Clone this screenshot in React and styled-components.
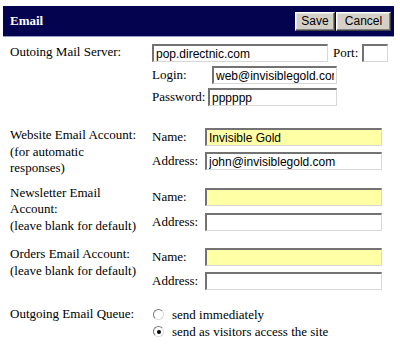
import React from "react";
import styled, { createGlobalStyle } from "styled-components";

const Global = createGlobalStyle`
  html, body { margin: 0; padding: 0; background: #ffffff; }
  body {
    font-family: "Liberation Serif", "Times New Roman", serif;
    font-size: 13px;
    color: #000000;
  }
`;

const Panel = styled.div`
  margin: 6px 0 0 3px;
  width: 391px;
`;

const Header = styled.div`
  box-sizing: border-box;
  height: 31px;
  display: flex;
  align-items: center;
  justify-content: space-between;
  padding: 0 3px 0 7px;
  background: #03034f;
  border-bottom: 1px solid #9a9ac8;
`;

const Title = styled.div`
  color: #ffffff;
  font-weight: bold;
  font-size: 13px;
`;

const ButtonGroup = styled.div`
  display: flex;
  gap: 1px;
`;

const Button = styled.button`
  box-sizing: border-box;
  width: ${(p) => p.$w}px;
  height: 19px;
  padding: 0;
  font-family: "Liberation Sans", Arial, sans-serif;
  font-size: 12px;
  color: #000;
  background: #d4d0c8;
  border: 1px solid;
  border-color: #ffffff #404040 #404040 #ffffff;
  box-shadow: inset -1px -1px #808080, inset 1px 1px #e8e6e0;
`;

const Form = styled.div`
  padding-left: 7px;
`;

const Section = styled.div`
  display: grid;
  grid-template-columns: 142px 1fr;
  align-items: start;
  margin-top: ${(p) => p.$top}px;
`;

const SectionLabel = styled.div`
  line-height: 16.5px;
`;

const Stack = styled.div`
  display: grid;
  row-gap: ${(p) => p.$gap}px;
`;

const Line = styled.div`
  display: flex;
  align-items: center;
  height: 18px;
`;

const InlineLabel = styled.span`
  width: ${(p) => p.$w}px;
  flex: none;
  white-space: nowrap;
`;

const PortLabel = styled.span`
  margin: 0 4px 0 5px;
`;

const Input = styled.input`
  box-sizing: border-box;
  width: ${(p) => p.$w}px;
  height: 18px;
  margin: 0;
  padding: 0 2px;
  font-family: "Liberation Sans", Arial, sans-serif;
  font-size: 12px;
  color: #000;
  background: ${(p) => (p.$yellow ? "#ffffa6" : "#ffffff")};
  border-style: solid;
  border-width: 2px 1px 1px 2px;
  border-color: #737373 #d8d8d8 #d8d8d8 #737373;
  outline: none;
`;

const AccountGrid = styled.div`
  display: grid;
  grid-template-columns: 53px 177px;
  align-items: center;
  row-gap: ${(p) => p.$gap}px;
  padding-top: ${(p) => p.$pad}px;
`;

const RadioList = styled.div`
  display: grid;
  line-height: 17px;
`;

const RadioRow = styled.label`
  display: flex;
  align-items: center;
`;

const RadioMark = styled.span`
  position: relative;
  box-sizing: border-box;
  width: 11px;
  height: 11px;
  margin-left: 1px;
  margin-right: 8px;
  border-radius: 50%;
  background: #ffffff;
  border: 1px solid;
  border-color: #7a7a7a #dcdcdc #dcdcdc #7a7a7a;
  &::after {
    content: "";
    display: ${(p) => (p.$checked ? "block" : "none")};
    position: absolute;
    left: 2.5px;
    top: 2.5px;
    width: 4px;
    height: 4px;
    border-radius: 50%;
    background: #000000;
  }
`;

function Account({ top, pad, gap, children, name = "", address = "" }) {
  return (
    <Section $top={top}>
      <SectionLabel>{children}</SectionLabel>
      <AccountGrid $pad={pad} $gap={gap}>
        <span>Name:</span>
        <Input $w={177} $yellow defaultValue={name} />
        <span>Address:</span>
        <Input $w={177} defaultValue={address} />
      </AccountGrid>
    </Section>
  );
}

export default function App() {
  return (
    <>
      <Global />
      <Panel>
        <Header>
          <Title>Email</Title>
          <ButtonGroup>
            <Button $w={40}>Save</Button>
            <Button $w={55}>Cancel</Button>
          </ButtonGroup>
        </Header>
        <Form>
          <Section $top={7}>
            <SectionLabel>Outoing Mail Server:</SectionLabel>
            <Stack $gap={4}>
              <Line>
                <Input $w={176} defaultValue="pop.directnic.com" />
                <PortLabel>Port:</PortLabel>
                <Input $w={26} defaultValue="" />
              </Line>
              <Line>
                <InlineLabel $w={60}>Login:</InlineLabel>
                <Input $w={125} defaultValue="web@invisiblegold.com" />
              </Line>
              <Line>
                <InlineLabel $w={56}>Password:</InlineLabel>
                <Input $w={129} defaultValue="pppppp" />
              </Line>
            </Stack>
          </Section>

          <Account top={21} pad={1} gap={6} name="Invisible Gold" address="john@invisiblegold.com">
            Website Email Account:
            <br />
            (for automatic
            <br />
            responses)
          </Account>

          <Account top={8} pad={3} gap={7}>
            Newsletter Email
            <br />
            Account:
            <br />
            (leave blank for default)
          </Account>

          <Account top={12} pad={2} gap={6}>
            Orders Email Account:
            <br />
            (leave blank for default)
          </Account>

          <Section $top={16}>
            <SectionLabel>Outgoing Email Queue:</SectionLabel>
            <RadioList>
              <RadioRow>
                <RadioMark />
                send immediately
              </RadioRow>
              <RadioRow>
                <RadioMark $checked />
                send as visitors access the site
              </RadioRow>
            </RadioList>
          </Section>
        </Form>
      </Panel>
    </>
  );
}
